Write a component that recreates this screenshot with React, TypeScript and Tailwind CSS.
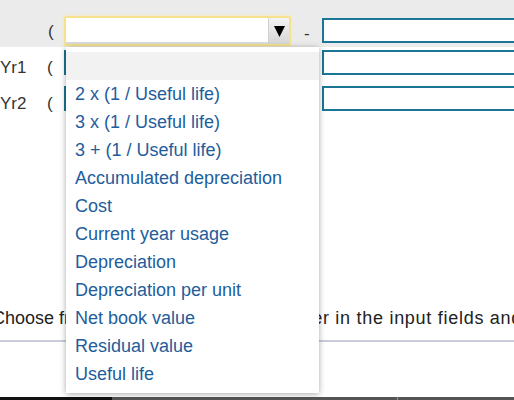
import React from 'react';

const options = [
  '2 x (1 / Useful life)',
  '3 x (1 / Useful life)',
  '3 + (1 / Useful life)',
  'Accumulated depreciation',
  'Cost',
  'Current year usage',
  'Depreciation',
  'Depreciation per unit',
  'Net book value',
  'Residual value',
  'Useful life',
];

const FieldBox: React.FC<{ className?: string }> = ({ className = '' }) => (
  <div className={`h-[25px] shrink-0 border-2 border-[#1b7594] bg-white ${className}`} />
);

export default function App() {
  return (
    <div className="relative h-[400px] w-[514px] overflow-hidden bg-white text-[17px] text-[#333] [font-family:'Liberation_Sans',Arial,sans-serif]">
      {/* header row */}
      <div className="flex h-[47px] items-start bg-[#ebebeb]">
        <span className="ml-[48px] mt-[22px] w-[6px] shrink-0 leading-[20px]">(</span>
        <div className="ml-[10px] mt-[16px] flex h-[30px] w-[227px] shrink-0 rounded-[2px] border-2 border-[#f6e28e] bg-white shadow-[0_0_3px_#f9e9a6]">
          <div className="flex-1 border-b-2 border-[#dcdcdc]" />
          <div className="flex w-[21px] items-center justify-center border-l border-[#d0d0d0] bg-gradient-to-b from-[#f4f4f4] to-[#d6d6d6]">
            <svg width="11" height="12" viewBox="0 0 11 12">
              <path d="M0 1h11L5.5 12z" fill="#000" />
            </svg>
          </div>
        </div>
        <span className="ml-[13px] mt-[24px] w-[6px] shrink-0 leading-[20px]">-</span>
        <FieldBox className="ml-[12px] mt-[18px] w-[220px]" />
      </div>

      {/* Yr rows */}
      <div className="flex h-[36px] items-start pt-[3px]">
        <span className="mt-[8px] w-[47px] shrink-0 leading-[20px]">Yr1</span>
        <span className="mt-[8px] w-[17px] shrink-0 leading-[20px]">(</span>
        <FieldBox className="w-[246px]" />
        <FieldBox className="ml-[12px] w-[220px]" />
      </div>
      <div className="flex h-[36px] items-start pt-[3px]">
        <span className="mt-[8px] w-[47px] shrink-0 leading-[20px]">Yr2</span>
        <span className="mt-[8px] w-[17px] shrink-0 leading-[20px]">(</span>
        <FieldBox className="w-[246px]" />
        <FieldBox className="ml-[12px] w-[220px]" />
      </div>

      {/* instructions */}
      <p className="ml-[-8px] mt-[189px] whitespace-nowrap text-[18px] leading-[20px] text-[#222]">
        Choose from the menu, or enter a numb
        <span className="tracking-[0.04em]">er in the input fields and press calculate</span>
      </p>
      <div className="mt-[12px] h-[2px] w-full bg-[#c9cddb]" />
      <div className="mt-[55px] flex h-[3px]">
        <div className="w-[112px] bg-[#111]" />
        <div className="w-[285px] bg-[#555]" />
        <div className="w-[1px] bg-[#999]" />
        <div className="flex-1 bg-[#555]" />
      </div>

      {/* open dropdown list */}
      <div className="absolute left-[66px] top-[47px] h-[346px] w-[253px] bg-white pt-[5px] text-[18px] shadow-[0_1px_6px_rgba(0,0,0,0.35)]">
        <div className="h-[28px] bg-[#f2f2f2]" />
        {options.map(o => (
          <div key={o} className="flex h-[28px] items-center pl-[9px] text-[#1e5d9c]">
            {o}
          </div>
        ))}
      </div>
    </div>
  );
}
